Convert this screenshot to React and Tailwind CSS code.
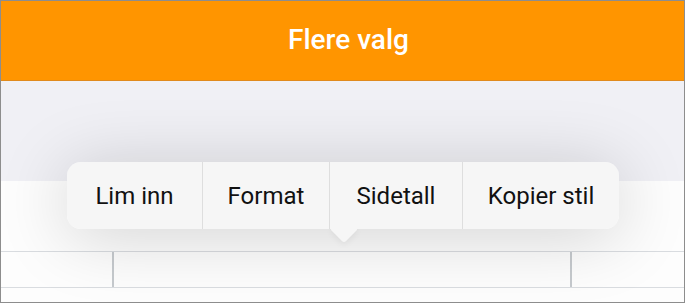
import React from "react";

const items = [
  { label: "Lim inn", w: "w-[136px]" },
  { label: "Format", w: "w-[127px]" },
  { label: "Sidetall", w: "w-[133px]" },
  { label: "Kopier stil", w: "w-[156px]" },
];

export default function App() {
  return (
    <div className="w-[686px] h-[304px] bg-white" style={{ fontFamily: "Roboto, 'Liberation Sans', sans-serif" }}>
      <div className="relative w-[685px] h-[303px] border border-[#8d8d8d] overflow-hidden flex flex-col">
        <div className="h-[80px] bg-[#ff9500] border-b border-[#e08a1c] flex items-center justify-center pl-[12px]">
          <span className="text-white text-[28px] font-medium leading-none pb-[2px]">Flere valg</span>
        </div>
        <div className="h-[100px] bg-[#f0f0f5]" />
        <div className="flex-1 bg-[#fdfdfd] flex flex-col">
          <div className="h-[70px]" />
          <div className="h-[37px] border-t border-b border-[#d9dce0] flex">
            <div className="w-[113px] border-r-2 border-[#c6cace]" />
            <div className="w-[458px] border-r-2 border-[#c6cace]" />
            <div className="flex-1" />
          </div>
        </div>

        {/* popover menu */}
        <div className="absolute left-[66px] top-[161px] w-[552px] h-[67px]">
          <div className="absolute inset-0 rounded-[14px] shadow-[0_6px_70px_rgba(0,0,0,0.18)]" />
          <div className="absolute left-[267px] top-[57px] w-[20px] h-[20px] rotate-45 rounded-[3px] bg-[#f6f6f6] shadow-[2px_2px_6px_rgba(0,0,0,0.05)]" />
          <div className="relative h-full rounded-[14px] bg-[#f6f6f6] flex text-[24px] text-[#111]">
            {items.map((it, i) => (
              <div
                key={it.label}
                className={`${it.w} h-full flex items-center justify-center ${i < items.length - 1 ? "border-r border-[#dedede]" : ""}`}
              >
                {it.label}
              </div>
            ))}
          </div>
        </div>
      </div>
    </div>
  );
}
